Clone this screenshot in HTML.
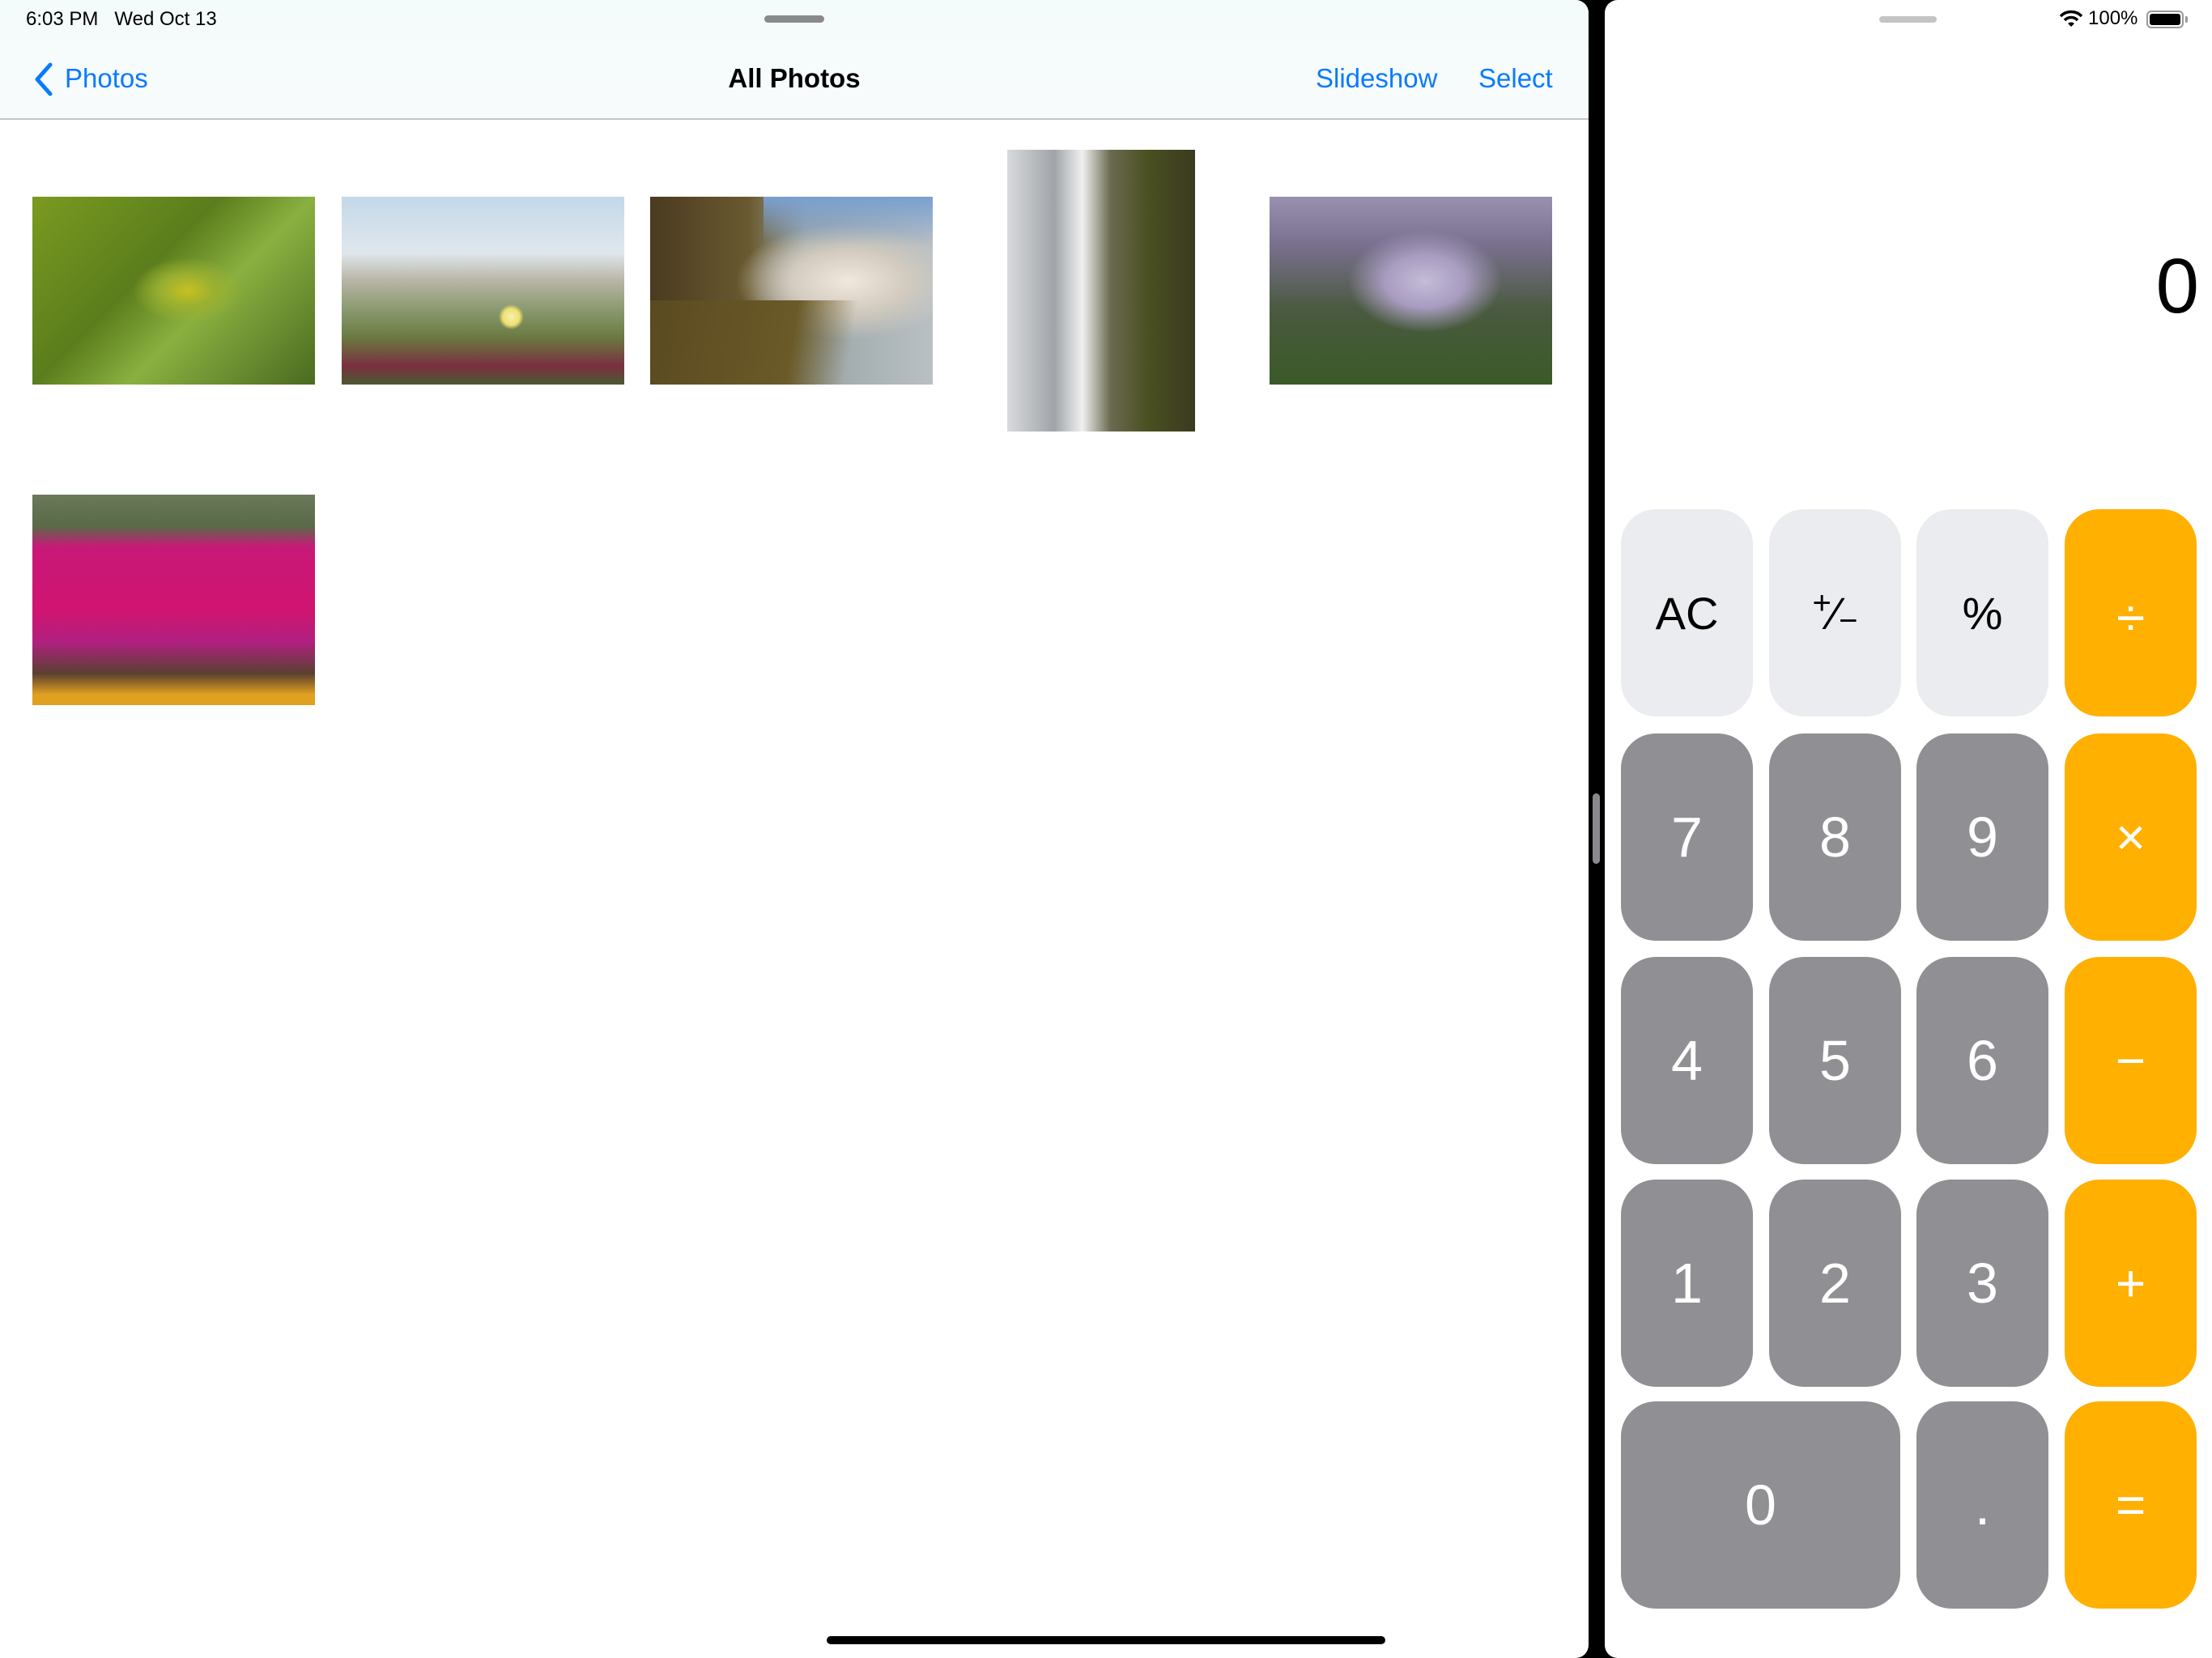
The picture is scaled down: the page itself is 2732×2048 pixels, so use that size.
<!DOCTYPE html>
<html><head><meta charset="utf-8"><style>
*{margin:0;padding:0;box-sizing:border-box}
body{width:2732px;height:2048px;background:#000;position:relative;overflow:hidden;font-family:"Liberation Sans",sans-serif}
#left{position:absolute;left:0;top:0;width:1962px;height:2048px;background:#fff;border-radius:0 16px 16px 0;overflow:hidden}
#nav{position:absolute;left:0;top:0;width:1962px;height:148px;background:linear-gradient(#f4fbfb,#f8fbfc);border-bottom:2px solid #c6c6c8}
.st{position:absolute;font-size:24px;color:#000;top:10px}
.blue{color:#0a7aff;font-size:33px;position:absolute;top:78px}
.ph{position:absolute}
#right{position:absolute;left:1982px;top:0;width:750px;height:2048px;background:#fff;border-radius:16px 0 0 16px}
.b{position:absolute;width:163px;height:256px;border-radius:43px;display:flex;align-items:center;justify-content:center;color:#fff;font-size:70px}
.l{background:#ebecf0;color:#000;font-size:56px}
.g{background:#909094}
.o{background:#ffb000;font-size:64px}
</style></head><body>
<div id="left">
 <div id="nav">
  <div class="st" style="left:32px">6:03 PM&nbsp;&nbsp;&nbsp;Wed Oct 13</div>
  <div style="position:absolute;left:944px;top:19px;width:74px;height:9px;border-radius:5px;background:#8a8a8e"></div>
  <svg style="position:absolute;left:38px;top:76px" width="30" height="44"><path d="M24 4 L8 22 L24 40" fill="none" stroke="#0a7aff" stroke-width="5" stroke-linecap="round" stroke-linejoin="round"/></svg>
  <div class="blue" style="left:80px">Photos</div>
  <div style="position:absolute;left:0;width:1962px;text-align:center;top:78px;font-size:33px;font-weight:bold">All Photos</div>
  <div class="blue" style="left:1625px">Slideshow</div>
  <div class="blue" style="left:1826px">Select</div>
 </div>
 <div class="ph" style="left:40px;top:243px;width:349px;height:232px;background:radial-gradient(ellipse at 55% 50%,#c8c020 0,#9ab030 12%,transparent 25%),linear-gradient(135deg,#7a9a20,#5b7d1c 40%,#8ab040 60%,#4a6a20)"></div>
 <div class="ph" style="left:422px;top:243px;width:349px;height:232px;background:radial-gradient(circle at 60% 64%,#f4f0b0 0,#f0e070 4%,transparent 6%),linear-gradient(#c4d8ea 0,#dfe7ec 30%,#b8b4a4 45%,#8a9a70 60%,#6a7a40 75%,#7a3040 90%,#4a5a30)"></div>
 <div class="ph" style="left:803px;top:243px;width:349px;height:232px;background:radial-gradient(ellipse at 70% 45%,#f0e8dc 0,#d4ccc0 20%,transparent 40%),linear-gradient(90deg,#4a3a20 0,#6a5a30 35%,#9aa4a4 55%,#b8c0c4 100%),#888;"><div style="position:absolute;left:0;bottom:0;width:100%;height:45%;background:linear-gradient(100deg,#5a4a20 0,#6a5a28 50%,transparent 70%)"></div><div style="position:absolute;left:140px;top:0;width:209px;height:60px;background:linear-gradient(#7aa0d0,transparent)"></div></div>
 <div class="ph" style="left:1244px;top:185px;width:232px;height:348px;background:linear-gradient(90deg,#d8dadc 0,#a0a4a8 25%,#f0f0f0 40%,#6a6a50 55%,#4a5020 75%,#3a3a20 100%)"></div>
 <div class="ph" style="left:1568px;top:243px;width:349px;height:232px;background:radial-gradient(ellipse at 55% 45%,#c4bcd8 0,#a89cc0 18%,transparent 35%),linear-gradient(#9a90b0 0,#7a7090 25%,#4a5a40 60%,#3a5a28 100%)"></div>
 <div class="ph" style="left:40px;top:611px;width:349px;height:260px;background:linear-gradient(#6a7a5a 0,#5a6a48 15%,#c81878 25%,#d01470 55%,#b02080 70%,#5a4030 85%,#e0a020 95%)"></div>
 <div style="position:absolute;left:1021px;top:2021px;width:690px;height:10px;border-radius:5px;background:#000"></div>
</div>
<div style="position:absolute;left:1967px;top:980px;width:9px;height:87px;border-radius:5px;background:#8a8a8e"></div>
<div id="right">
 <div style="position:absolute;left:339px;top:20px;width:71px;height:8px;border-radius:4px;background:#c4c4c6"></div>
 <svg style="position:absolute;left:561px;top:12px" width="30" height="22" viewBox="0 0 30 22"><path d="M2 8 A18 18 0 0 1 28 8" fill="none" stroke="#000" stroke-width="3.5"/><path d="M7 13 A11 11 0 0 1 23 13" fill="none" stroke="#000" stroke-width="3.5"/><path d="M11 17 L15 21 L19 17 A6 6 0 0 0 11 17Z" fill="#000"/></svg>
 <div style="position:absolute;left:597px;top:9px;font-size:24px">100%</div>
 <div style="position:absolute;left:669px;top:13px;width:46px;height:22px;border:2px solid #999;border-radius:6px;padding:2px"><div style="width:100%;height:100%;background:#000;border-radius:3px"></div></div>
 <div style="position:absolute;left:717px;top:20px;width:3px;height:8px;background:#999;border-radius:0 2px 2px 0"></div>
 <div style="position:absolute;right:16px;top:299px;font-size:96px;color:#000">0</div>
 <div class="b l" style="left:20px;top:629px">AC</div>
 <div class="b l" style="left:203px;top:629px"><span style="font-size:40px;position:relative;top:-12px">+</span><span style="font-size:56px">⁄</span><span style="font-size:40px;position:relative;top:10px">−</span></div>
 <div class="b l" style="left:385px;top:629px">%</div>
 <div class="b o" style="left:568px;top:629px"><span style="position:relative;top:6px">÷</span></div>
 <div class="b g" style="left:20px;top:906px">7</div>
 <div class="b g" style="left:203px;top:906px">8</div>
 <div class="b g" style="left:385px;top:906px">9</div>
 <div class="b o" style="left:568px;top:906px">×</div>
 <div class="b g" style="left:20px;top:1182px">4</div>
 <div class="b g" style="left:203px;top:1182px">5</div>
 <div class="b g" style="left:385px;top:1182px">6</div>
 <div class="b o" style="left:568px;top:1182px">−</div>
 <div class="b g" style="left:20px;top:1457px">1</div>
 <div class="b g" style="left:203px;top:1457px">2</div>
 <div class="b g" style="left:385px;top:1457px">3</div>
 <div class="b o" style="left:568px;top:1457px">+</div>
 <div class="b g" style="left:20px;top:1731px;width:345px">0</div>
 <div class="b g" style="left:385px;top:1731px">.</div>
 <div class="b o" style="left:568px;top:1731px">=</div>
</div>
</body></html>
